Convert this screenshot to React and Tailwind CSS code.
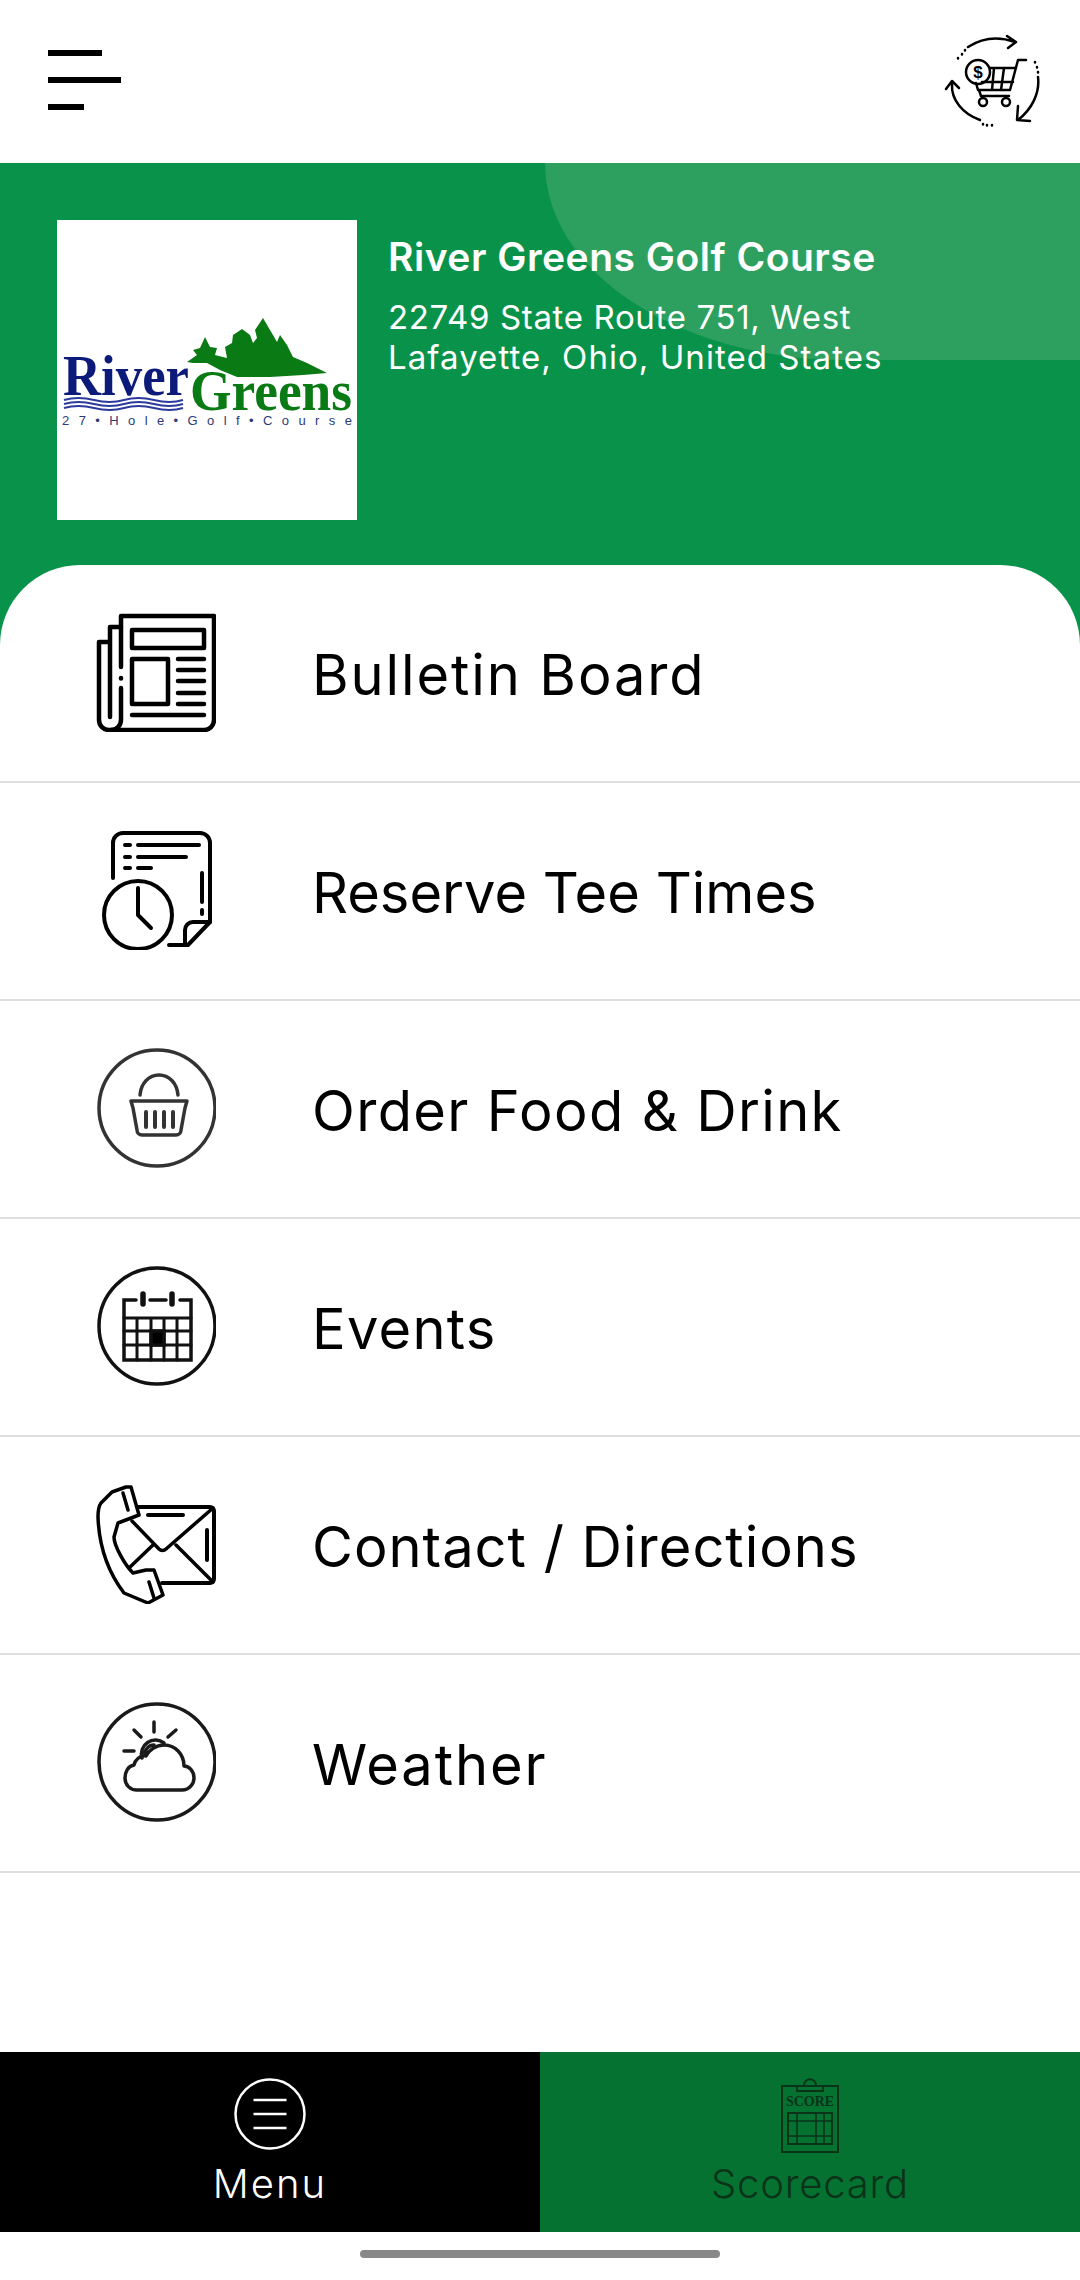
import React from "react";

const FONT = "font-['Inter','Open_Sans',sans-serif]";

// --- icons, drawn on a 120x120 box ---
function NewsIcon() {
  return (
    <svg width="120" height="120" viewBox="0 0 120 120" fill="none" stroke="#000" strokeWidth="4.5" strokeLinecap="round" strokeLinejoin="round">
      <path d="M25 55V4h93v104a10 10 0 0 1-10 10H15" />
      <path d="M25 66v.5" />
      <path d="M25 76v32a10 10 0 0 1-10 10h-2a10 10 0 0 1-10-10V30h10" />
      <path d="M14 105V15h11" />
      <rect x="36" y="18" width="72" height="18" />
      <rect x="36" y="47" width="36" height="45" />
      <path d="M82 47h26M82 58h26M82 69h26M82 81h26M82 92h26M36 103h72" />
    </svg>
  );
}

function ClockIcon() {
  return (
    <svg width="120" height="120" viewBox="0 0 120 120" fill="none" stroke="#000" strokeWidth="4" strokeLinecap="round" strokeLinejoin="round">
      <path d="M17 48V13a10 10 0 0 1 10-10h77a10 10 0 0 1 10 10v79L92 115H73" />
      <path d="M114 92H97a8 8 0 0 0-8 8v14" />
      <path d="M29 15h5M42 15h61M29 27h5M42 27h48M29 38h5M42 38h13M106 43v29M106 80v4" />
      <circle cx="42" cy="85" r="34" />
      <path d="M42 58v27l13 13" />
    </svg>
  );
}

function BasketIcon() {
  return (
    <svg width="120" height="120" viewBox="0 0 120 120" fill="none" stroke="#333" strokeWidth="3.5" strokeLinecap="round" strokeLinejoin="round">
      <circle cx="61" cy="60" r="58" />
      <path d="M44 47c1-12 9-20 19-20s18 8 19 20" />
      <path d="M35 53h56l-2 7-4 22a5 5 0 0 1-5 5H46a5 5 0 0 1-5-5l-4-22z" />
      <path d="M50 64v15M59 64v15M68 64v15M77 64v15" strokeWidth="4" />
    </svg>
  );
}

function CalendarIcon() {
  return (
    <svg width="120" height="120" viewBox="0 0 120 120" fill="none" stroke="#111" strokeWidth="3.5" strokeLinecap="round">
      <circle cx="61" cy="60" r="58" />
      <path d="M40 34H28v60h67V34H84M54 34h16" />
      <path d="M28 52h67M28 65h67M28 79h67M41 52v42M55 52v42M68 52v42M81 52v42" strokeWidth="3" />
      <rect x="55" y="65" width="13" height="14" fill="#000" />
      <path d="M47 28v10M76 28v10" strokeWidth="5.5" />
    </svg>
  );
}

function ContactIcon() {
  return (
    <svg width="120" height="120" viewBox="0 0 120 120" fill="none" stroke="#000" strokeWidth="3.5" strokeLinecap="round" strokeLinejoin="round">
      <path d="M42 23h72a4 4 0 0 1 4 4v68a4 4 0 0 1-4 4H66" strokeWidth="4" />
      <path d="M36 37l27 28a5 5 0 0 0 7 0l47-41M57 61L33 84M80 61l37 37" />
      <path d="M52 31h35M111 46v30" strokeWidth="4" />
      <path d="M30 3L16 8 5 19c-3 4-3 9-3 14 1 28 10 55 26 76l24 10 15-8-9-25h-8l-13 3c-8-8-19-27-19-36l4-14 21-8-8-28z" />
      <path d="M27 9l5 17M53 98l5 16" />
    </svg>
  );
}

function WeatherIcon() {
  return (
    <svg width="120" height="120" viewBox="0 0 120 120" fill="none" stroke="#1a1a1a" strokeWidth="3.5" strokeLinecap="round" strokeLinejoin="round">
      <circle cx="61" cy="60" r="58" />
      <path d="M41 88H86C94 88 98 81 98 76 98 69 93 64 88 64 88 52 79 43 68 43 60 43 53 48 50 54 44 53 39 58 38 63 32 64 29 70 29 76 29 83 34 88 41 88Z" />
      <path d="M46 56a14 14 0 0 1 22-15M49 52a9 9 0 0 1 9-9" />
      <path d="M58 20v10M38 28l7 7M80 28l-8 7M28 49h10" />
    </svg>
  );
}

function CartIcon() {
  return (
    <svg width="120" height="120" viewBox="0 0 120 120" fill="none" stroke="#000" strokeWidth="2.5" strokeLinecap="round" strokeLinejoin="round">
      <path d="M38 25c14-9 30-11 47-5M77 14l9 6-8 6" />
      <path d="M108 55c2 16-6 32-20 43M88 84l-1 14 13 1" />
      <path d="M50 98C33 92 21 78 22 62M16 67l6-8 7 7" />
      <path d="M28 36v.5M32 32v.5M35 28v.5M105 40v.5M107 45v.5M108 50v.5M53 102v.5M57 103v.5M62 103v.5" />
      <circle cx="48" cy="50" r="12" />
      <text x="48" y="56" textAnchor="middle" fontSize="17" fontWeight="700" fill="#000" stroke="none" fontFamily="Liberation Sans, sans-serif">$</text>
      <path d="M96 38h-8l-8 30H48l-2-7M60 46h25M52 60h31M64 46l-2 22M74 46l-3 22" />
      <path d="M49 68l2 6h28" />
      <circle cx="53" cy="80" r="4" />
      <circle cx="76" cy="80" r="4" />
    </svg>
  );
}

function MenuIcon() {
  return (
    <svg width="72" height="72" viewBox="0 0 72 72" fill="none" stroke="#fff" strokeWidth="2.5">
      <circle cx="36" cy="36" r="34.5" />
      <path d="M19.5 22h33M19.5 36h33M19.5 50h33" />
    </svg>
  );
}

function ScoreIcon() {
  return (
    <svg width="60" height="76" viewBox="0 0 60 76" fill="none" stroke="#0a3318" strokeWidth="2">
      <path d="M2 9h56v66H2z" />
      <path d="M17 9h26v5H17zM24 9c0-9 12-9 12 0" />
      <text x="30" y="29" textAnchor="middle" fontSize="14" fontWeight="700" fill="#0a3318" stroke="none" fontFamily="Liberation Serif, serif">SCORE</text>
      <rect x="8" y="36" width="44" height="31" />
      <path d="M8 44h44M8 59h44M17 36v31M36 36v31M44 36v31" strokeWidth="1.6" />
    </svg>
  );
}

function Logo() {
  return (
    <svg width="300" height="300" viewBox="0 0 300 300" className="bg-white">
      <path
        d="M130 142L140 135 136 130 143 128 148 117 153 127 160 128 158 135 170 138 168 127 175 123 176 115 185 109 193 115 196 123 200 118 198 110 206 98 213 110 216 115 220 122 223 115 230 125 236 137 250 143 270 153 246 155 213 157 180 157 163 150 150 143 136 143Z"
        fill="#0a7a14"
      />
      <text x="6" y="175" fontSize="56" fontWeight="700" fill="#0c1a7a" textLength="126" lengthAdjust="spacingAndGlyphs" fontFamily="Liberation Serif, serif">River</text>
      <text x="133" y="190" fontSize="56" fontWeight="700" fill="#0a7a14" textLength="162" lengthAdjust="spacingAndGlyphs" fontFamily="Liberation Serif, serif">Greens</text>
      <path d="M7 180q14-4 30 0t30 0 30 0 29 0M7 184q14-4 30 0t30 0 30 0 29 0M7 188q14-4 30 0t30 0 30 0 29 0" fill="none" stroke="#2b3a9c" strokeWidth="2" />
      <text x="5" y="205" fontSize="13" fill="#2c3a78" textLength="290" fontFamily="Liberation Sans, sans-serif">27•Hole•Golf•Course</text>
    </svg>
  );
}

const rows = [
  { label: "Bulletin Board", icon: <NewsIcon />, spacing: "tracking-[1.9px]" },
  { label: "Reserve Tee Times", icon: <ClockIcon />, spacing: "tracking-[0px]" },
  { label: "Order Food & Drink", icon: <BasketIcon />, spacing: "tracking-[1.35px]" },
  { label: "Events", icon: <CalendarIcon />, spacing: "tracking-[1.25px]" },
  { label: "Contact / Directions", icon: <ContactIcon />, spacing: "tracking-[1px]" },
  { label: "Weather", icon: <WeatherIcon />, spacing: "tracking-[1.9px]" },
];

export default function App() {
  return (
    <div className={`flex h-[2280px] w-[1080px] flex-col overflow-hidden bg-white ${FONT}`}>
      {/* top bar */}
      <div className="flex h-[163px] items-center justify-between pl-12 pr-[30px]">
        <div className="mb-[4px] flex flex-col gap-[21px]">
          <div className="h-[6px] w-[54px] bg-black" />
          <div className="h-[6px] w-[73px] bg-black" />
          <div className="h-[6px] w-[36px] bg-black" />
        </div>
        <CartIcon />
      </div>

      {/* green hero + list */}
      <div className="relative flex flex-1 flex-col bg-[#09934a]">
        <div className="absolute right-0 top-0 h-[197px] w-[535px] rounded-bl-[300px_197px] bg-[#2da05f]" />
        <div className="relative flex h-[402px] pl-[57px] pt-[57px]">
          <Logo />
          <div className="pl-[31px] pt-[14px] text-white">
            <div className="text-[39px] font-semibold leading-[46px] tracking-[0.5px]">River Greens Golf Course</div>
            <div className="mt-[17px] text-[33px] leading-[40px] tracking-[0.65px]">
              22749 State Route 751, West
              <br />
              <span className="tracking-[1.05px]">Lafayette, Ohio, United States</span>
            </div>
          </div>
        </div>

        <div className="relative flex-1 rounded-t-[80px] bg-white">
          {rows.map((row) => (
            <div key={row.label} className="flex h-[218px] items-center gap-[96px] border-b-2 border-[#dedede] pl-[96px]">
              <div className="mb-[2px]">{row.icon}</div>
              <span className={`mt-[3px] text-[56px] text-black ${row.spacing}`}>{row.label}</span>
            </div>
          ))}
        </div>
      </div>

      {/* bottom nav */}
      <div className="flex h-[180px]">
        <div className="flex flex-1 flex-col items-center bg-black pt-[26px] text-white">
          <MenuIcon />
          <span className="mt-[10px] text-[40px] font-light leading-[48px] tracking-[2px]">Menu</span>
        </div>
        <div className="flex flex-1 flex-col items-center bg-[#067232] pt-[25px] text-[#0a3318]">
          <ScoreIcon />
          <span className="mt-[7px] text-[40px] font-light leading-[48px] tracking-[0.8px]">Scorecard</span>
        </div>
      </div>

      {/* home indicator */}
      <div className="flex h-[48px] justify-center pt-[18px]">
        <div className="h-[8px] w-[360px] rounded-full bg-[#888888]" />
      </div>
    </div>
  );
}
